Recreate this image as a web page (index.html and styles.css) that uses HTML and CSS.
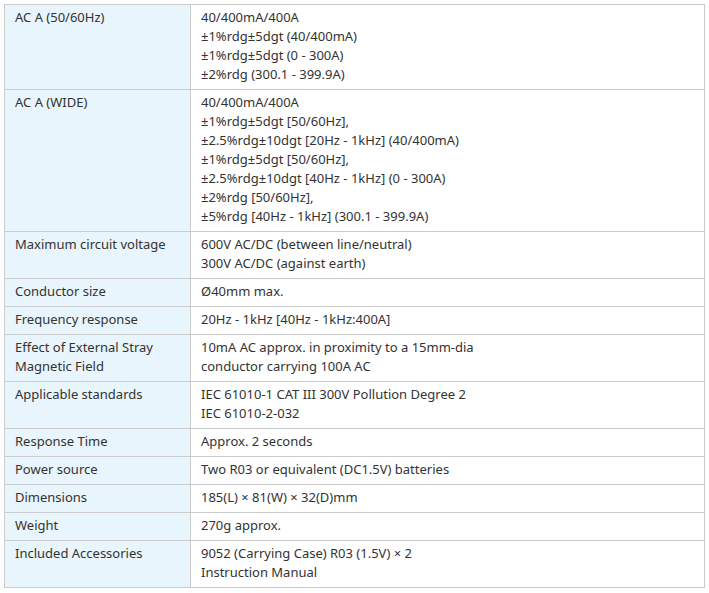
FILE: index.html
```html
<!DOCTYPE html>
<html>
<head>
<meta charset="utf-8">
<link rel="stylesheet" href="styles.css">
</head>
<body>
<table class="spec">
<tr><th>AC A (50/60Hz)</th><td>40/400mA/400A<br>±1%rdg±5dgt (40/400mA)<br>±1%rdg±5dgt (0 - 300A)<br>±2%rdg (300.1 - 399.9A)</td></tr>
<tr><th>AC A (WIDE)</th><td>40/400mA/400A<br>±1%rdg±5dgt [50/60Hz],<br>±2.5%rdg±10dgt [20Hz - 1kHz] (40/400mA)<br>±1%rdg±5dgt [50/60Hz],<br>±2.5%rdg±10dgt [40Hz - 1kHz] (0 - 300A)<br>±2%rdg [50/60Hz],<br>±5%rdg [40Hz - 1kHz] (300.1 - 399.9A)</td></tr>
<tr><th>Maximum circuit voltage</th><td>600V AC/DC (between line/neutral)<br>300V AC/DC (against earth)</td></tr>
<tr><th>Conductor size</th><td>Ø40mm max.</td></tr>
<tr><th>Frequency response</th><td>20Hz - 1kHz [40Hz - 1kHz:400A]</td></tr>
<tr><th>Effect of External Stray Magnetic Field</th><td>10mA AC approx. in proximity to a 15mm-dia<br>conductor carrying 100A AC</td></tr>
<tr><th>Applicable standards</th><td>IEC 61010-1 CAT III 300V Pollution Degree 2<br>IEC 61010-2-032</td></tr>
<tr><th>Response Time</th><td>Approx. 2 seconds</td></tr>
<tr><th>Power source</th><td>Two R03 or equivalent (DC1.5V) batteries</td></tr>
<tr><th>Dimensions</th><td>185(L) × 81(W) × 32(D)mm</td></tr>
<tr><th>Weight</th><td>270g approx.</td></tr>
<tr><th>Included Accessories</th><td>9052 (Carrying Case) R03 (1.5V) × 2<br>Instruction Manual</td></tr>
</table>
</body>
</html>
```
FILE: styles.css
```css
html, body {
  margin: 0;
  padding: 0;
  background: #fff;
}
body {
  padding: 4px;
  font-family: "Noto Sans", "DejaVu Sans", sans-serif;
  font-size: 13px;
  line-height: 19px;
  color: #333;
}
.spec {
  border-collapse: collapse;
  width: 701px;
}
.spec th, .spec td {
  border: 1px solid #ccc;
  padding: 3px 10px 5px;
  vertical-align: top;
  text-align: left;
  font-weight: normal;
}
.spec th {
  width: 165px;
  background: #e8f5fd;
}
```
